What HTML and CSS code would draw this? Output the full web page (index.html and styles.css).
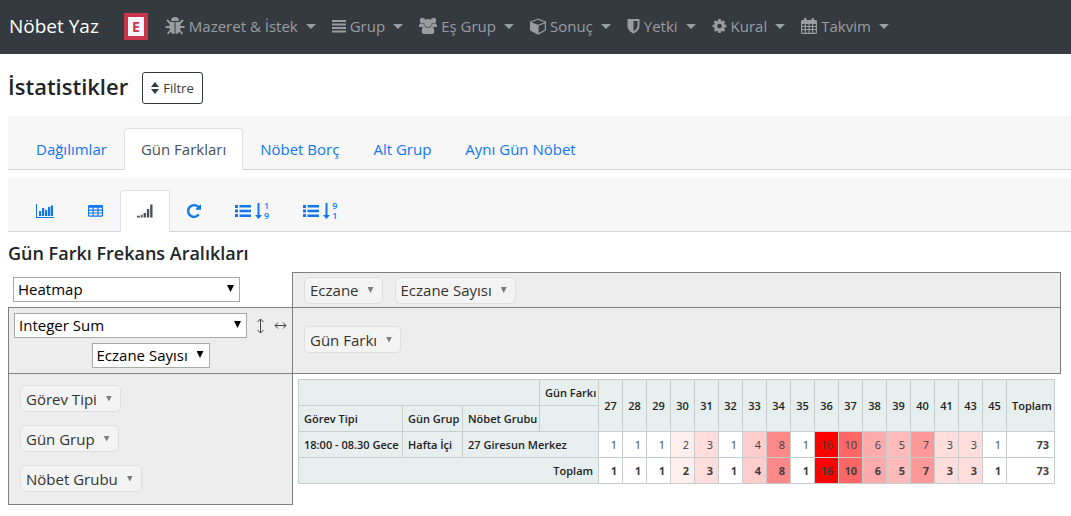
FILE: index.html
```html
<!DOCTYPE html>
<html lang="tr">
<head>
<meta charset="utf-8">
<meta name="viewport" content="width=device-width, initial-scale=1">
<title>Nöbet Yaz - İstatistikler</title>
<link rel="stylesheet" href="styles.css">
</head>
<body>
<nav class="navbar">
  <a class="brand" href="#">Nöbet Yaz</a>
  <a class="badge" href="#">E</a>
  <ul class="menu">
    <li><a href="#"><svg class="icon" width="20" height="20" viewBox="0 0 20 20"><path d="M6 5a4 4 0 0 1 8 0z"/><path d="M4.500 6h5v12C6 17.800 4.500 15 4.500 12zM10.500 6h5v6c0 3-1.500 5.800-5 6z"/><path d="M2 4l3.500 3.500M18 4l-3.500 3.500M.5 11H5M15 11h4.500M2.500 18l3.500-4M17.500 18L14 14" fill="none" stroke="currentColor" stroke-width="1.800"/></svg>Mazeret &amp; İstek</a></li>
    <li><a href="#"><svg class="icon" width="14" height="14" viewBox="0 0 14 14"><path d="M0 1h14v2H0zM0 4.500h14v2H0zM0 8h14v2H0zM0 11.500h14v2H0z"/></svg>Grup</a></li>
    <li><a href="#"><svg class="icon" width="18" height="18" viewBox="0 0 18 18"><circle cx="3.500" cy="3.500" r="2.700"/><circle cx="14.500" cy="3.500" r="2.700"/><path d="M1 6.500h3.500L6 10H0c0-1.500.2-2.500 1-3.500zM17 6.500h-3.500L12 10h6c0-1.500-.2-2.500-1-3.500z"/><circle cx="9" cy="6" r="3.900"/><path d="M5 9.500c2 1.500 6 1.500 8 0 1.500.5 2.300 2.500 2.300 5 0 1.500-1 2.500-2.300 2.500H5c-1.300 0-2.300-1-2.300-2.500 0-2.500.8-4.500 2.300-5z"/></svg>Eş Grup</a></li>
    <li><a href="#"><svg class="icon" width="16" height="18" viewBox="0 0 1664 1792"><path d="M896 1629l640-349v-636l-640 233v752zm-64-865l698-254-698-254-698 254zm832-252v768q0 35-18 65t-49 47l-704 384q-28 16-61 16t-61-16l-704-384q-31-17-49-47t-18-65v-768q0-40 23-73t61-50l704-256q22-8 44-8t44 8l704 256q38 17 61 50t23 73z"/></svg>Sonuç</a></li>
    <li><a href="#"><svg class="icon" width="13" height="16" viewBox="0 0 13 16"><path fill-rule="evenodd" d="M.5 1h12v7c0 3.500-3 6-6 7.500C3.500 14 .5 11.500.5 8zM6.500 3v10.200c2-1.200 4-3 4-5.200V3z"/></svg>Yetki</a></li>
    <li><a href="#"><svg class="icon" width="15" height="16" viewBox="64 64 1664 1664"><path d="M1152 896q0-106-75-181t-181-75-181 75-75 181 75 181 181 75 181-75 75-181zm512-109v222q0 12-8 23t-20 13l-185 28q-19 54-39 91 35 50 107 138 10 12 10 25t-9 23q-27 37-99 108t-94 71q-12 0-26-9l-138-108q-44 23-91 38-16 136-29 186-7 28-36 28h-222q-14 0-24.500-8.500t-11.500-21.500l-28-184q-49-16-90-37l-141 107q-10 9-25 9-14 0-25-11-126-114-165-168-7-10-7-23 0-12 8-23 15-21 51-66.500t54-70.500q-27-50-41-99l-183-27q-13-2-21-12.500t-8-23.500v-222q0-12 8-23t19-13l186-28q14-46 39-92-40-57-107-138-10-12-10-24 0-10 9-23 26-36 98.500-107.500t94.500-71.500q13 0 26 10l138 107q44-23 91-38 16-136 29-186 7-28 36-28h222q14 0 24.500 8.500t11.500 21.500l28 184q49 16 90 37l142-107q9-9 24-9 13 0 25 10 129 119 165 170 7 8 7 22 0 12-8 23-15 21-51 66.500t-54 70.500q26 50 41 98l183 28q13 2 21 12.500t8 23.500z"/></svg>Kural</a></li>
    <li><a href="#"><svg class="icon" width="16" height="18" viewBox="0 0 16 18"><path fill-rule="evenodd" d="M1 3h14l1 1v12l-1 1H1l-1-1V4zM1.200 7v2h2.600V7zM5 7v2h2.500V7zM8.600 7v2H11V7zM12.200 7v2h2.600V7zM1.200 10v2h2.600v-2zM5 10v2h2.500v-2zM8.600 10v2H11v-2zM12.200 10v2h2.600v-2zM1.200 13v2.700h2.600V13zM5 13v2.700h2.500V13zM8.600 13v2.700H11V13zM12.200 13v2.700h2.600V13z"/><rect x="3" y="1" width="2.500" height="4.500" rx="1"/><rect x="10.500" y="1" width="2.500" height="4.500" rx="1"/></svg>Takvim</a></li>
  </ul>
</nav>

<main class="page">
  <header class="page-head">
    <h1>İstatistikler</h1>
    <button class="filter" type="button"><svg class="icon" width="8" height="12" viewBox="0 0 8 12"><path d="M4 0l4 5H0zM0 7h8l-4 5z"/></svg>Filtre</button>
  </header>

  <div class="tabs">
    <a class="tab" href="#">Dağılımlar</a>
    <a class="tab active" href="#">Gün Farkları</a>
    <a class="tab" href="#">Nöbet Borç</a>
    <a class="tab" href="#">Alt Grup</a>
    <a class="tab" href="#">Aynı Gün Nöbet</a>
  </div>

  <div class="tabs">
    <a class="tab" href="#" aria-label="Grafik"><svg class="icon" width="18" height="16" viewBox="0 0 18 16"><path d="M0 1h1v13h17v1H0zM3 8h2.200v5H3zM6 5h2.200v8H6zM9 7h2.200v6H9zM12 4h2.200v9H12zM14.800 2.500H17V13h-2.200z"/></svg></a>
    <a class="tab" href="#" aria-label="Tablo"><svg class="icon" width="15" height="16" viewBox="0 0 16 16"><path fill-rule="evenodd" d="M1 1.500h14l1 1V13l-1 1H1l-1-1V2.500zM1.200 4.500v2h3.600v-2zM6 4.500v2h4v-2zM11.200 4.500v2h3.600v-2zM1.200 7.600v2h3.600v-2zM6 7.600v2h4v-2zM11.200 7.600v2h3.600v-2zM1.200 10.700v2.100h3.600v-2.100zM6 10.700v2.100h4v-2.100zM11.200 10.700v2.100h3.600v-2.100z"/></svg></a>
    <a class="tab active" href="#" aria-label="Frekans"><svg class="icon" width="16" height="16" viewBox="0 0 17 16"><path d="M0 13h3v2H0zM4 12h2v3H4zM7 10h2.500v5H7zM10.500 6H13v9h-2.500zM14 1h2.500v14H14z"/></svg></a>
    <a class="tab" href="#" aria-label="Yenile"><svg class="icon" width="14" height="16" viewBox="128 80 1536 1632"><path d="M1664 256v448q0 26-19 45t-45 19h-448q-42 0-59-40-17-39 14-69l138-138q-148-137-349-137-104 0-198.500 40.500t-163.500 109.500-109.500 163.500-40.500 198.500 40.500 198.500 109.500 163.500 163.500 109.500 198.500 40.500q119 0 225-52t179-147q7-10 23-12 15 0 25 9l137 138q9 8 9.500 20.500t-7.500 22.500q-109 132-264 204.500t-327 72.500q-156 0-298-61t-245-164-164-245-61-298 61-298 164-245 245-164 298-61q147 0 284.500 55.500t244.500 156.500l130-129q29-31 70-14 39 17 39 59z"/></svg></a>
    <a class="tab" href="#"><svg class="icon" width="27" height="18" viewBox="0 0 27 18"><path d="M0 3h3v3H0zM4.500 3H16v2.500H4.500zM0 7.500h3v3H0zM4.500 7.800H16v2.500H4.500zM0 12h3v3H0zM4.500 12.500H16V15H4.500zM22.500 1h2v12H27l-3.500 4-3.500-4h2.500z"/></svg><span class="digits"><span>1</span><span>9</span></span></a>
    <a class="tab" href="#"><svg class="icon" width="27" height="18" viewBox="0 0 27 18"><path d="M0 3h3v3H0zM4.500 3H16v2.500H4.500zM0 7.500h3v3H0zM4.500 7.800H16v2.500H4.500zM0 12h3v3H0zM4.500 12.500H16V15H4.500zM22.500 1h2v12H27l-3.500 4-3.500-4h2.500z"/></svg><span class="digits"><span>9</span><span>1</span></span></a>
  </div>

  <h2>Gün Farkı Frekans Aralıkları</h2>

  <section class="pivot">
    <div class="cell renderer">
      <span class="select wide"><select aria-label="Görünüm"><option>Heatmap</option></select></span>
    </div>
    <ul class="cell unused">
      <li class="attr">Eczane<button type="button" aria-label="Eczane filtresi"></button></li>
      <li class="attr">Eczane Sayısı<button type="button" aria-label="Eczane Sayısı filtresi"></button></li>
    </ul>
    <div class="cell vals">
      <div class="line">
        <span class="select grow"><select aria-label="Hesaplama"><option>Integer Sum</option></select></span>
        <a class="order" href="#" aria-label="Satır sırası"><svg width="9" height="16" viewBox="0 0 9 16"><path d="M4.500 1v14M1.500 4l3-3 3 3M1.500 12l3 3 3-3"/></svg></a>
        <a class="order" href="#" aria-label="Sütun sırası"><svg width="13" height="9" viewBox="0 0 13 9"><path d="M1 4.500h11M4 1.500l-3 3 3 3M9 1.500l3 3-3 3"/></svg></a>
      </div>
      <span class="select"><select aria-label="Değer"><option>Eczane Sayısı</option></select></span>
    </div>
    <ul class="cell cols">
      <li class="attr">Gün Farkı<button type="button" aria-label="Gün Farkı filtresi"></button></li>
    </ul>
    <ul class="cell rows">
      <li class="attr">Görev Tipi<button type="button" aria-label="Görev Tipi filtresi"></button></li>
      <li class="attr">Gün Grup<button type="button" aria-label="Gün Grup filtresi"></button></li>
      <li class="attr">Nöbet Grubu<button type="button" aria-label="Nöbet Grubu filtresi"></button></li>
    </ul>
    <div class="cell output">
      <table class="heat">
        <colgroup><col class="c-type"><col class="c-day"><col class="c-group"><col class="c-axis"></colgroup>
        <colgroup class="c-num" span="17"></colgroup>
        <colgroup><col class="c-total"></colgroup>
        <thead>
          <tr><th colspan="3"></th><th class="right">Gün Farkı</th><th rowspan="2">27</th><th rowspan="2">28</th><th rowspan="2">29</th><th rowspan="2">30</th><th rowspan="2">31</th><th rowspan="2">32</th><th rowspan="2">33</th><th rowspan="2">34</th><th rowspan="2">35</th><th rowspan="2">36</th><th rowspan="2">37</th><th rowspan="2">38</th><th rowspan="2">39</th><th rowspan="2">40</th><th rowspan="2">41</th><th rowspan="2">43</th><th rowspan="2">45</th><th rowspan="2">Toplam</th></tr>
          <tr><th class="left">Görev Tipi</th><th class="left">Gün Grup</th><th class="left">Nöbet Grubu</th><th></th></tr>
        </thead>
        <tbody>
          <tr><th class="left">18:00 - 08.30 Gece</th><th class="left">Hafta İçi</th><th class="left" colspan="2">27 Giresun Merkez</th><td>1</td><td>1</td><td>1</td><td class="h2">2</td><td class="h3">3</td><td>1</td><td class="h4">4</td><td class="h8">8</td><td>1</td><td class="h16">16</td><td class="h10">10</td><td class="h6">6</td><td class="h5">5</td><td class="h7">7</td><td class="h3">3</td><td class="h3">3</td><td>1</td><td class="sum">73</td></tr>
          <tr class="sum"><th class="right" colspan="4">Toplam</th><td>1</td><td>1</td><td>1</td><td class="h2">2</td><td class="h3">3</td><td>1</td><td class="h4">4</td><td class="h8">8</td><td>1</td><td class="h16">16</td><td class="h10">10</td><td class="h6">6</td><td class="h5">5</td><td class="h7">7</td><td class="h3">3</td><td class="h3">3</td><td>1</td><td>73</td></tr>
        </tbody>
      </table>
    </div>
  </section>
</main>
</body>
</html>
```
FILE: styles.css
```css
* { box-sizing: border-box; }

body {
  margin: 0;
  background: #fff;
  color: #212529;
  font: 15px/24px "Open Sans", "Noto Sans", sans-serif;
}

a { color: #1276ee; text-decoration: none; }
ul { list-style: none; margin: 0; padding: 0; }
.icon { fill: currentColor; flex: none; }

/* Top bar */
.navbar {
  display: flex;
  align-items: center;
  height: 54px;
  padding: 0 9px 2px;
  background: #343a40;
  white-space: nowrap;
}
.brand { color: #fff; font-size: 19px; }
.badge {
  width: 24px;
  margin: 0 9px 0 25px;
  border: 4px solid #c9364b;
  background: #fbf3fa;
  color: #c9364b;
  font-size: 14px;
  font-weight: 700;
  line-height: 19px;
  text-align: center;
}
.menu { display: flex; }
.menu a {
  display: flex;
  align-items: center;
  gap: 4px;
  padding: 0 8px;
  color: #999da0;
}
.menu a::after {
  content: "";
  margin-left: 4px;
  border: 5px solid transparent;
  border-top-color: currentColor;
  border-bottom: 0;
}

/* Page title */
.page { padding: 16px 0 0 8px; }
.page-head { display: flex; align-items: flex-start; gap: 14px; margin-bottom: 12px; }
h1, h2 { margin: 0; font-weight: 600; }
h1 { font-size: 22px; line-height: 32px; }
h2 { margin: 8px 0 6px; font-size: 18px; line-height: 26px; }
.filter {
  display: flex;
  align-items: center;
  gap: 4px;
  height: 32px;
  margin-top: 2px;
  padding: 0 8px;
  border: 1px solid #343a40;
  border-radius: 3px;
  background: #fff;
  color: #343a40;
  font: 13px/20px "Open Sans", sans-serif;
}

/* Tab strips */
.tabs {
  display: flex;
  align-items: flex-end;
  height: 54px;
  margin-bottom: 8px;
  padding: 0 11px;
  border-bottom: 1px solid #d5d5d5;
  background: #f7f7f7;
}
.tab {
  display: flex;
  align-items: center;
  height: 42px;
  margin-bottom: -1px;
  padding: 0 16px 2px;
  border: 1px solid transparent;
  border-bottom: 0;
  border-radius: 4px 4px 0 0;
  white-space: nowrap;
}
.tab.active { border-color: #dee2e6; background: #fff; color: #495057; }
.digits {
  display: flex;
  flex-direction: column;
  margin-left: 2px;
  font-size: 9px;
  font-weight: 600;
  line-height: 10px;
}

/* Pivot frame */
.pivot {
  display: grid;
  grid-template-columns: 284px 1fr;
  grid-template-rows: auto auto auto;
  margin-right: 10px;
}
.cell { border: 0 solid #808080; background: #ededed; }
.renderer { padding: 5px; background: none; }
.unused { display: flex; align-items: center; gap: 12px; height: 35px; padding: 0 11px; border-width: 1px 1px 0 1px; }
.vals {
  display: flex;
  flex-direction: column;
  align-items: center;
  gap: 5px;
  padding: 5px;
  border-width: 1px 0 0 1px;
}
.cols { display: flex; align-items: center; padding: 0 11px 2px; border-width: 1px 1px 0 1px; }
.rows {
  display: flex;
  flex-direction: column;
  align-items: flex-start;
  gap: 13px;
  padding: 11px 11px 12px;
  border-width: 1px 0 1px 1px;
}
.output { padding: 5px; border-width: 1px 0 0 1px; background: none; }
.line { display: flex; align-items: center; gap: 9px; width: 100%; }
.order { display: flex; }
.order svg { fill: none; stroke: #444; }

.select { display: inline-block; position: relative; color: #000; }
.select::after {
  content: "";
  position: absolute;
  top: 8px;
  right: 6px;
  width: 7px;
  height: 7px;
  background: #000;
  clip-path: polygon(0 0, 100% 0, 50% 100%);
  pointer-events: none;
}
.select select {
  display: block;
  width: 100%;
  height: 25px;
  padding: 0 20px 0 4px;
  border: 1px solid #a9a9a9;
  border-radius: 0;
  background: #fff;
  color: inherit;
  font: inherit;
  line-height: 23px;
  appearance: none;
}
.wide { width: 227px; }
.grow { flex: 1; }

.attr {
  display: flex;
  align-items: center;
  height: 27px;
  padding: 0 8px 0 5px;
  border: 1px solid #dedede;
  border-radius: 5px;
  background: #f3f3f3;
  color: #333;
}
.attr button {
  width: 6px;
  height: 6px;
  margin-left: 9px;
  padding: 0;
  border: 0;
  background: #7c7c7c;
  clip-path: polygon(0 0, 100% 0, 50% 100%);
}

/* Heatmap table */
.heat {
  table-layout: fixed;
  width: 757px;
  border-collapse: collapse;
  color: #3d3d3d;
  font-size: 11px;
  line-height: 15px;
  white-space: nowrap;
}
.c-type { width: 104px; }
.c-day { width: 60px; }
.c-group { width: 77px; }
.c-axis { width: 59px; }
.c-num { width: 24px; }
.c-total { width: 48px; }
.heat th, .heat td { height: 26px; padding: 0 5px; border: 1px solid #c8cccb; }
.heat th { background: #e6eeee; color: #222; font-weight: 600; text-align: center; }
.heat td { background: #fff; text-align: right; }
.heat .left { text-align: left; }
.heat .right { text-align: right; }
.heat .sum, .heat .sum td { font-weight: 700; }
.heat .h2 { background: #ffeeee; }
.heat .h3 { background: #ffdddd; }
.heat .h4 { background: #ffcccc; }
.heat .h5 { background: #ffbbbb; }
.heat .h6 { background: #ffaaaa; }
.heat .h7 { background: #ff9999; }
.heat .h8 { background: #ff8888; }
.heat .h10 { background: #ff6666; }
.heat .h16 { background: #ff0000; }
```
